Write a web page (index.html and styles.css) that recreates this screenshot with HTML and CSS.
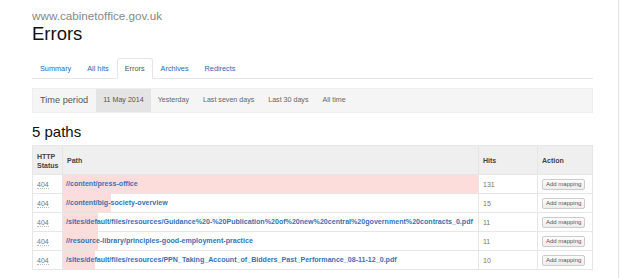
FILE: index.html
```html
<!DOCTYPE html>
<html lang="en">
<head>
  <meta charset="UTF-8">
  <title>Errors</title>
  <link rel="stylesheet" href="styles.css">
</head>
<body>
  <div class="page">
    <div class="site-name">www.cabinetoffice.gov.uk</div>
    <h1>Errors</h1>

    <!-- tabs -->
    <ul class="tabs">
      <li><a href="#">Summary</a></li>
      <li><a href="#">All hits</a></li>
      <li class="active"><a href="#">Errors</a></li>
      <li><a href="#">Archives</a></li>
      <li><a href="#">Redirects</a></li>
    </ul>

    <!-- period filter -->
    <div class="period">
      <span class="period-label">Time period</span>
      <a class="active" href="#">11 May 2014</a>
      <a href="#">Yesterday</a>
      <a href="#">Last seven days</a>
      <a href="#">Last 30 days</a>
      <a href="#">All time</a>
    </div>

    <h2>5 paths</h2>

    <table class="hits">
      <tr>
        <th class="status">HTTP<br>Status</th>
        <th>Path</th>
        <th class="count">Hits</th>
        <th class="action">Action</th>
      </tr>
      <tr>
        <td><abbr>404</abbr></td>
        <td class="path"><span class="bar" style="width: 100%"></span><a href="#">//content/press-office</a></td>
        <td>131</td>
        <td><button>Add mapping</button></td>
      </tr>
      <tr>
        <td><abbr>404</abbr></td>
        <td class="path"><span class="bar" style="width: 11.5%"></span><a href="#">//content/big-society-overview</a></td>
        <td>15</td>
        <td><button>Add mapping</button></td>
      </tr>
      <tr>
        <td><abbr>404</abbr></td>
        <td class="path"><span class="bar" style="width: 8.4%"></span><a href="#">/sites/default/files/resources/Guidance%20-%20Publication%20of%20new%20central%20government%20contracts_0.pdf</a></td>
        <td>11</td>
        <td><button>Add mapping</button></td>
      </tr>
      <tr>
        <td><abbr>404</abbr></td>
        <td class="path"><span class="bar" style="width: 8.4%"></span><a href="#">//resource-library/principles-good-employment-practice</a></td>
        <td>11</td>
        <td><button>Add mapping</button></td>
      </tr>
      <tr>
        <td><abbr>404</abbr></td>
        <td class="path"><span class="bar" style="width: 7.6%"></span><a href="#">/sites/default/files/resources/PPN_Taking_Account_of_Bidders_Past_Performance_08-11-12_0.pdf</a></td>
        <td>10</td>
        <td><button>Add mapping</button></td>
      </tr>
    </table>
  </div>
  <div class="edge"></div>
</body>
</html>
```

FILE: styles.css
```css
body {
  margin: 0;
  background: #fff;
  font-family: 'Liberation Sans', Arial, sans-serif;
  color: #333;
  overflow: hidden;
}

.page {
  width: 561px;
  padding: 9px 0 0 32px;
}

.edge {
  position: absolute;
  top: 0;
  left: 618px;
  width: 1px;
  height: 278px;
  background: #e4e4e4;
}

a {
  color: #2a6ab3;
  text-decoration: none;
}

.site-name {
  font-size: 11.7px;
  color: #888;
  line-height: 14px;
}

h1 {
  margin: 1px 0 0;
  font-size: 18.5px;
  font-weight: normal;
  color: #111;
  line-height: 20px;
}

.tabs {
  list-style: none;
  display: flex;
  margin: 14px 0 0;
  padding: 0;
  border-bottom: 1px solid #e6e6e6;
}

.tabs li {
  margin-bottom: -1px;
}

.tabs a {
  display: block;
  padding: 0 7px;
  height: 19px;
  line-height: 19px;
  font-size: 7.3px;
  border: 1px solid transparent;
  border-radius: 3px 3px 0 0;
}

.tabs li.active a {
  color: #555;
  border-color: #e6e6e6 #e6e6e6 #fff;
  background: #fff;
}

.period {
  display: flex;
  align-items: stretch;
  margin-top: 9px;
  height: 23px;
  background: #f5f5f5;
  border: 1px solid #eeeeee;
}

.period-label {
  padding: 0 8px 0 7px;
  line-height: 23px;
  font-size: 9.2px;
  color: #555;
}

.period a {
  padding: 0 7px;
  line-height: 23px;
  font-size: 7.1px;
  color: #666;
}

.period a.active {
  background: #e4e4e4;
  color: #555;
}

h2 {
  margin: 10px 0 4px;
  font-size: 15px;
  font-weight: normal;
  color: #111;
  line-height: 18px;
}

table.hits {
  width: 100%;
  table-layout: fixed;
  border-collapse: collapse;
  font-size: 7px;
}

.hits th,
.hits td {
  border: 1px solid #e6e6e6;
  padding: 0 4px;
  text-align: left;
  height: 18px;
  white-space: nowrap;
}

.hits th {
  background: #efefef;
  font-weight: bold;
  color: #444;
  height: 27px;
  line-height: 9px;
  padding-top: 1px;
}

.hits th.status { width: 21px; }
.hits th.count { width: 50px; }
.hits th.action { width: 46px; }

.hits td {
  color: #777;
}

abbr {
  text-decoration: none;
  border-bottom: 1px dotted #bbb;
}

td.path {
  position: relative;
  padding: 0;
}

td.path .bar {
  position: absolute;
  top: 0;
  left: 0;
  bottom: 0;
  background: #fddcdc;
}

td.path a {
  position: relative;
  padding-left: 3px;
  font-size: 7.1px;
  font-weight: bold;
  color: #3673b5;
}

button {
  display: block;
  font-family: inherit;
  font-size: 6px;
  line-height: 7px;
  color: #555;
  padding: 1px 3px;
  margin-top: 1px;
  background: linear-gradient(#fdfdfd, #ececec);
  border: 1px solid #ccc;
  border-radius: 2px;
}
```
